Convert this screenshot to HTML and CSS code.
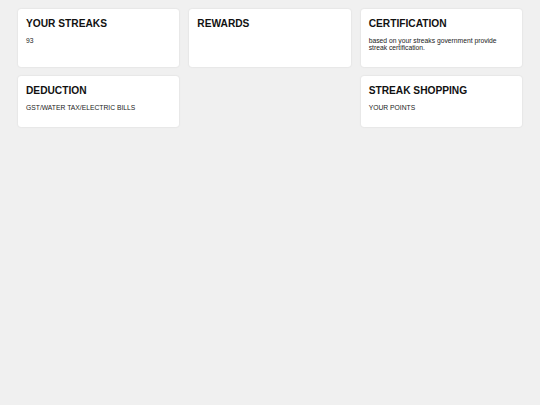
FILE: index.html
```html
<!DOCTYPE html>
<html lang="en">
<head>
    <meta charset="UTF-8">
    <meta name="viewport" content="width=device-width, initial-scale=1.0">
    <title>Streaks</title>
    <link rel="stylesheet" href="styles.css">
</head>
<body>
    <div class="dashboard">
        <div class="card">
            <h2>YOUR STREAKS</h2>
            <p>93</p>
        </div>
        <div class="card">
            <h2>REWARDS</h2>
        </div>
        <div class="card">
            <h2>CERTIFICATION</h2>
            <p>based on your streaks government provide streak certification.</p>
        </div>
        <div class="card">
            <h2>DEDUCTION</h2>
            <p>GST/WATER TAX/ELECTRIC BILLS</p>
        </div>
        <div class="card shop">
            <h2>STREAK SHOPPING</h2>
            <p>YOUR POINTS</p>
        </div>
    </div>
</body>
</html>
```

FILE: styles.css
```css
body {
    background-color: #f0f0f0;
    font-family: 'Liberation Sans', Arial, sans-serif;
    margin: 0;
    padding: 0;
}
.dashboard {
    display: grid;
    grid-template-columns: repeat(3, 1fr);
    gap: 9px 10px;
    padding: 9px 18px;
}
.card {
    background-color: white;
    border-radius: 3px;
    box-shadow: 0 0 2px rgba(0, 0, 0, 0.12);
    padding: 9px 8px 16px;
}
.card h2 {
    font-size: 10.2px;
    color: #111;
    margin: 0 0 8px;
}
.card p {
    font-size: 6.75px;
    color: #222;
    margin: 0;
}
.shop {
    grid-column: 3;
}
```
